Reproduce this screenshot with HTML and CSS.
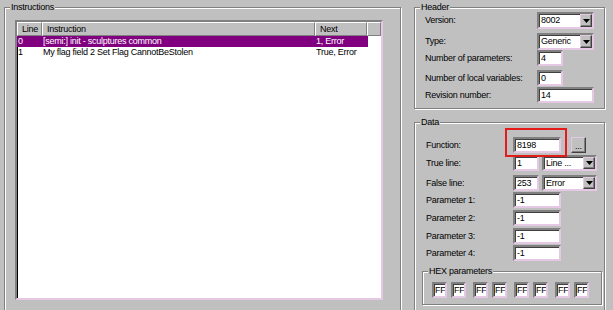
FILE: index.html
```html
<!DOCTYPE html>
<html lang="en">
<head>
    <meta charset="UTF-8">
    <meta name="viewport" content="width=device-width, initial-scale=1.0">
    <title>Instruction Editor</title>
    <link rel="stylesheet" href="styles.css">
</head>
<body>
    <div class="window">
        <!-- Instructions list -->
        <fieldset class="group group-instr">
            <legend>Instructions</legend>
            <div class="listview">
                <div class="lv-head">
                    <div class="lv-col col-line">Line</div>
                    <div class="lv-col col-instr">Instruction</div>
                    <div class="lv-col col-next">Next</div>
                    <div class="lv-col col-fill"></div>
                </div>
                <div class="lv-row selected">
                    <span>0</span>
                    <span>[semi:] init - sculptures common</span>
                    <span>1, Error</span>
                </div>
                <div class="lv-row">
                    <span>1</span>
                    <span>My flag field 2 Set Flag CannotBeStolen</span>
                    <span>True, Error</span>
                </div>
            </div>
        </fieldset>

        <div class="side">
            <!-- Header panel -->
            <fieldset class="group group-header">
                <legend>Header</legend>
                <div class="form hdr-form">
                    <label>Version:</label>
                    <div class="combo w57">
                        <span class="combo-text">8002</span>
                        <span class="combo-btn"><svg width="7" height="4" viewBox="0 0 7 4"><polygon points="0,0 7,0 3.5,4" fill="#000"/></svg></span>
                    </div>
                    <label>Type:</label>
                    <div class="combo w57">
                        <span class="combo-text">Generic</span>
                        <span class="combo-btn"><svg width="7" height="4" viewBox="0 0 7 4"><polygon points="0,0 7,0 3.5,4" fill="#000"/></svg></span>
                    </div>
                    <label>Number of parameters:</label>
                    <div class="edit w26">4</div>
                    <label>Number of local variables:</label>
                    <div class="edit w26">0</div>
                    <label>Revision number:</label>
                    <div class="edit w57">14</div>
                </div>
            </fieldset>

            <!-- Data panel -->
            <fieldset class="group group-data">
                <legend>Data</legend>
                <div class="data-body">
                    <div class="form data-form">
                        <label>Function:</label>
                        <div class="ctl-row">
                            <span class="marked"><span class="edit w48">8198</span></span>
                            <span class="dots-btn">...</span>
                        </div>
                        <label>True line:</label>
                        <div class="ctl-row">
                            <span class="edit w26">1</span>
                            <div class="combo small w55">
                                <span class="combo-text">Line ...</span>
                                <span class="combo-btn"><svg width="7" height="4" viewBox="0 0 7 4"><polygon points="0,0 7,0 3.5,4" fill="#000"/></svg></span>
                            </div>
                        </div>
                        <label>False line:</label>
                        <div class="ctl-row">
                            <span class="edit w26">253</span>
                            <div class="combo small w55">
                                <span class="combo-text">Error</span>
                                <span class="combo-btn"><svg width="7" height="4" viewBox="0 0 7 4"><polygon points="0,0 7,0 3.5,4" fill="#000"/></svg></span>
                            </div>
                        </div>
                        <label>Parameter 1:</label>
                        <div class="edit w48">-1</div>
                        <label>Parameter 2:</label>
                        <div class="edit w48">-1</div>
                        <label>Parameter 3:</label>
                        <div class="edit w48">-1</div>
                        <label>Parameter 4:</label>
                        <div class="edit w48">-1</div>
                    </div>

                    <fieldset class="group group-hex">
                        <legend>HEX parameters</legend>
                        <div class="hex-row">
                            <div class="hex-pair"><span class="edit hex">FF</span><span class="edit hex">FF</span></div>
                            <div class="hex-pair"><span class="edit hex">FF</span><span class="edit hex">FF</span></div>
                            <div class="hex-pair"><span class="edit hex">FF</span><span class="edit hex">FF</span></div>
                            <div class="hex-pair"><span class="edit hex">FF</span><span class="edit hex">FF</span></div>
                        </div>
                    </fieldset>
                </div>
            </fieldset>
        </div>
    </div>
</body>
</html>
```

FILE: styles.css
```css
body {
    margin: 0;
    height: 310px;
    overflow: hidden;
    background-color: #c0c0c0;
    font-family: "Liberation Sans", Arial, sans-serif;
    font-size: 9px;
    letter-spacing: -0.25px;
    color: #000;
}
.window {
    display: flex;
    padding: 2px 0 0 4px;
}

/* group boxes */
.group {
    margin: 0;
    padding: 0;
    min-width: 0;
    box-sizing: border-box;
    border: 1px solid #808080;
    box-shadow: 1px 1px 0 #fff, inset 1px 1px 0 #fff;
}
.group legend {
    margin-left: 5px;
    padding: 0 1px;
    line-height: 10px;
    background-color: #c0c0c0;
}
.group-instr {
    width: 397px;
    height: 312px;
    flex: none;
}
.side {
    width: 191px;
    margin-left: 13px;
    flex: none;
}
.group-header {
    width: 100%;
}
.group-data {
    width: 100%;
    margin-top: 8px;
}

/* list view */
.listview {
    margin: 8px 0 0 10px;
    width: 368px;
    height: 280px;
    box-sizing: border-box;
    background-color: #fff;
    border: 2px solid;
    border-color: #808080 #e4c8e4 #e4c8e4 #808080;
    box-shadow: inset 1px 1px 0 #000;
}
.lv-head {
    display: flex;
    height: 14px;
}
.lv-col {
    box-sizing: border-box;
    height: 14px;
    line-height: 12px;
    padding-left: 4px;
    background-color: #c0c0c0;
    border: 1px solid;
    border-color: #fff #808080 #808080 #fff;
    white-space: nowrap;
}
.col-line { width: 25px; }
.col-instr { width: 273px; }
.col-next { width: 52px; }
.col-fill { flex: 1; }
.lv-row {
    display: grid;
    grid-template-columns: 25px 273px 53px;
    width: 351px;
    height: 11px;
    line-height: 11px;
}
.lv-row span {
    padding-left: 1px;
    white-space: nowrap;
    overflow: hidden;
}
.lv-row.selected {
    background-color: #800080;
    color: #fff;
}

/* forms */
.form {
    display: grid;
    align-items: start;
}
.form label {
    line-height: 16px;
    white-space: nowrap;
}
.hdr-form {
    padding: 0 0 5px 10px;
    grid-template-columns: 112px auto;
    grid-template-rows: 21px 17px 20px 17px 16px;
}
.hdr-form label:nth-of-type(-n+2) {
    line-height: 17px;
}
.data-body {
    padding: 10px 0 6px 7px;
}
.data-form {
    grid-template-columns: 91px auto;
    grid-template-rows: 18px 20px 17px 18px 18px 17px 16px;
}
.data-form label {
    padding-left: 4px;
}
.ctl-row {
    display: flex;
    align-items: flex-start;
}

.edit {
    display: block;
    box-sizing: border-box;
    height: 16px;
    line-height: 12px;
    padding-left: 2px;
    background-color: #fff;
    border: 2px solid;
    border-color: #808080 #e4c8e4 #e4c8e4 #808080;
    box-shadow: inset 1px 1px 0 #404040;
    white-space: nowrap;
    overflow: hidden;
}
.w26 { width: 26px; }
.w48 { width: 48px; }
.w55 { width: 55px; }
.w57 { width: 57px; }

.combo {
    display: flex;
    box-sizing: border-box;
    height: 17px;
    background-color: #fff;
    border: 2px solid;
    border-color: #808080 #e4c8e4 #e4c8e4 #808080;
    box-shadow: inset 1px 1px 0 #404040;
}
.combo.small {
    height: 16px;
    margin-left: 3px;
}
.combo-text {
    flex: 1;
    padding-left: 2px;
    line-height: 13px;
    white-space: nowrap;
    overflow: hidden;
}
.combo.small .combo-text {
    line-height: 12px;
}
.combo-btn {
    display: flex;
    align-items: center;
    justify-content: center;
    width: 12px;
    box-sizing: border-box;
    background-color: #c0c0c0;
    border: 1px solid;
    border-color: #e4c8e4 #404040 #404040 #e4c8e4;
    box-shadow: inset -1px -1px 0 #808080;
}

.marked {
    position: relative;
    display: block;
}
.marked::after {
    content: "";
    position: absolute;
    left: -8px;
    top: -9px;
    width: 62px;
    height: 29px;
    box-sizing: border-box;
    border: 2px solid #e41b1b;
}
.dots-btn {
    display: block;
    box-sizing: border-box;
    width: 15px;
    height: 16px;
    margin-left: 10px;
    line-height: 16px;
    text-align: center;
    background-color: #c0c0c0;
    border: 1px solid;
    border-color: #e4c8e4 #404040 #404040 #e4c8e4;
    box-shadow: inset -1px -1px 0 #808080;
}

/* hex parameters */
.group-hex {
    width: 180px;
    margin-top: 5px;
}
.hex-row {
    display: flex;
    gap: 7px;
    padding: 6px 0 6px 9px;
}
.hex-pair {
    display: flex;
    gap: 4px;
}
.hex {
    width: 15px;
    padding-left: 1px;
}
```
